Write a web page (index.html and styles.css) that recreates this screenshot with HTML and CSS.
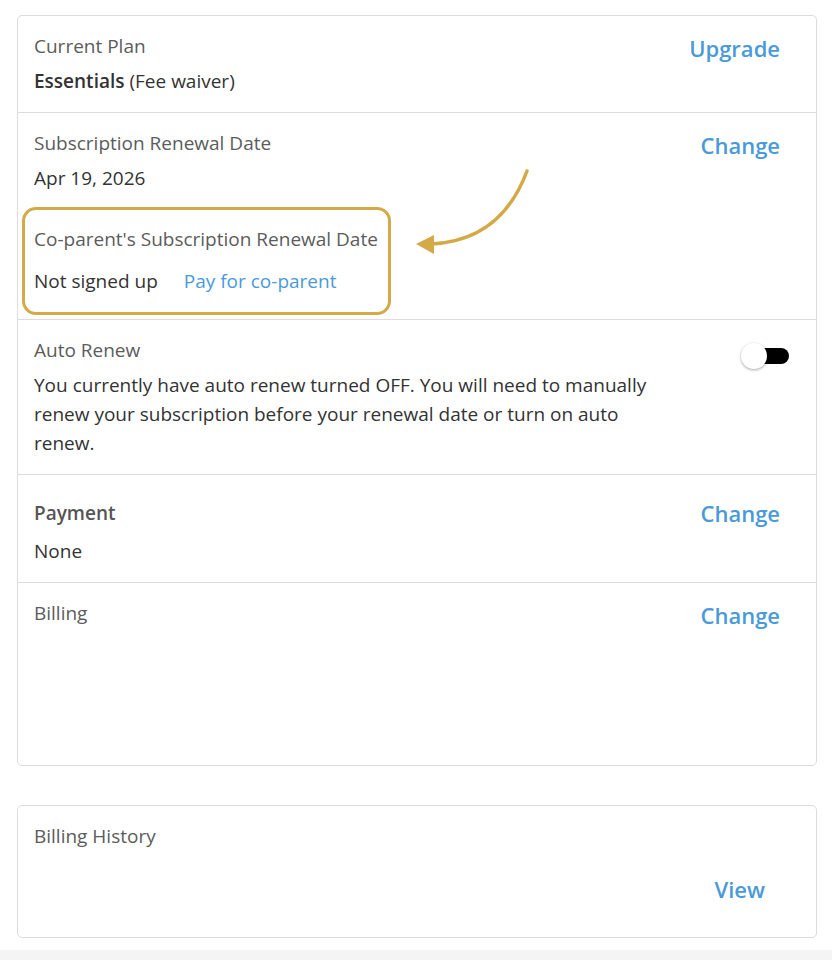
FILE: index.html
```html
<!DOCTYPE html>
<html lang="en">
<head>
<meta charset="utf-8">
<title>Subscription</title>
<link rel="stylesheet" href="styles.css">
</head>
<body>
<main class="page">
  <section class="card">
    <div class="row row-plan">
      <div class="info">
        <div class="label">Current Plan</div>
        <div class="value"><strong>Essentials</strong> (Fee waiver)</div>
      </div>
      <a class="action" href="#">Upgrade</a>
    </div>

    <div class="row row-renewal">
      <div class="info">
        <div class="label">Subscription Renewal Date</div>
        <div class="value">Apr 19, 2026</div>
        <div class="coparent">
          <div class="label">Co-parent's Subscription Renewal Date</div>
          <div class="value value-inline">
            <span>Not signed up</span>
            <a class="inline-link" href="#">Pay for co-parent</a>
          </div>
        </div>
      </div>
      <a class="action" href="#">Change</a>
      <svg class="pointer" width="140" height="100" viewBox="0 0 140 100" aria-hidden="true">
        <path d="M126 5 Q100 75 30 78" fill="none" stroke="#d4aa49" stroke-width="3.5" stroke-linecap="round"/>
        <polygon points="15,78 33,69 33,88" fill="#d4aa49"/>
      </svg>
    </div>

    <div class="row row-auto">
      <div class="info">
        <div class="label">Auto Renew</div>
        <p class="desc">You currently have auto renew turned OFF. You will need to manually renew your subscription before your renewal date or turn on auto renew.</p>
      </div>
      <span class="toggle"><span class="knob"></span></span>
    </div>

    <div class="row row-payment">
      <div class="info">
        <div class="label label-strong">Payment</div>
        <div class="value">None</div>
      </div>
      <a class="action" href="#">Change</a>
    </div>

    <div class="row row-billing">
      <div class="info">
        <div class="label">Billing</div>
      </div>
      <a class="action" href="#">Change</a>
    </div>
  </section>

  <section class="card card-history">
    <div class="label">Billing History</div>
    <a class="action action-view" href="#">View</a>
  </section>
</main>
<footer class="footer"></footer>
</body>
</html>
```

FILE: styles.css
```css
* {
  box-sizing: border-box;
}

body {
  margin: 0;
  background: #fff;
  font-family: "Open Sans", "Liberation Sans", sans-serif;
  color: #333;
  font-size: 19px;
}

.page {
  padding: 15px 15px 12px 17px;
  display: flex;
  flex-direction: column;
  gap: 39px;
}

.card {
  border: 1px solid #dcdcdc;
  border-radius: 5px;
  background: #fff;
}

.row {
  position: relative;
  display: flex;
  justify-content: space-between;
  align-items: flex-start;
  padding: 17px 36px 0 16px;
  border-bottom: 1px solid #dcdcdc;
}

.row:last-child {
  border-bottom: none;
}

.label {
  color: #5c5c5c;
  font-size: 19px;
  line-height: 26px;
}

.label-strong {
  font-weight: 600;
  color: #555;
}

.value {
  color: #333;
  font-size: 19px;
  line-height: 26px;
  margin-top: 9px;
}

.value strong {
  font-weight: 600;
}

.action {
  color: #4a9ad9;
  font-weight: 600;
  font-size: 22px;
  line-height: 28px;
  text-decoration: none;
  margin-top: 1px;
}

.row-plan {
  height: 97px;
}

.row-renewal {
  height: 207px;
}

.row-renewal .action {
  margin-top: 1px;
}

.coparent {
  margin: 16px 0 0 -12px;
  width: 369px;
  height: 108px;
  border: 3px solid #d4aa49;
  border-radius: 14px;
  padding: 16px 0 0 9px;
}

.coparent .value {
  margin-top: 16px;
}

.value-inline {
  display: flex;
  gap: 26px;
}

.inline-link {
  color: #4a9ad9;
  text-decoration: none;
}

.pointer {
  position: absolute;
  left: 383px;
  top: 53px;
}

.row-auto {
  height: 155px;
}

.desc {
  margin: 8px 0 0;
  max-width: 632px;
  line-height: 29px;
  color: #333;
}

.toggle {
  position: relative;
  flex: none;
  width: 48px;
  height: 26px;
  margin: 6px -9px 0 0;
}

.toggle::before {
  content: "";
  position: absolute;
  left: 12px;
  right: 0;
  top: 5px;
  height: 16px;
  border-radius: 8px;
  background: #000;
}

.knob {
  position: absolute;
  left: 0;
  top: 0;
  width: 26px;
  height: 26px;
  border-radius: 50%;
  background: #fff;
  box-shadow: 0 1px 3px rgba(0, 0, 0, 0.35);
}

.row-payment {
  height: 108px;
  padding-top: 25px;
}

.row-payment .value {
  margin-top: 12px;
}

.row-payment .action {
  margin-top: -1px;
}

.row-billing {
  height: 182px;
}

.row-billing .action {
  margin-top: 1px;
}

.card-history {
  height: 133px;
  padding: 17px 51px 0 16px;
  display: flex;
  flex-direction: column;
}

.action-view {
  align-self: flex-end;
  margin-top: 26px;
}

.footer {
  height: 10px;
  background: #f4f4f4;
}
```
